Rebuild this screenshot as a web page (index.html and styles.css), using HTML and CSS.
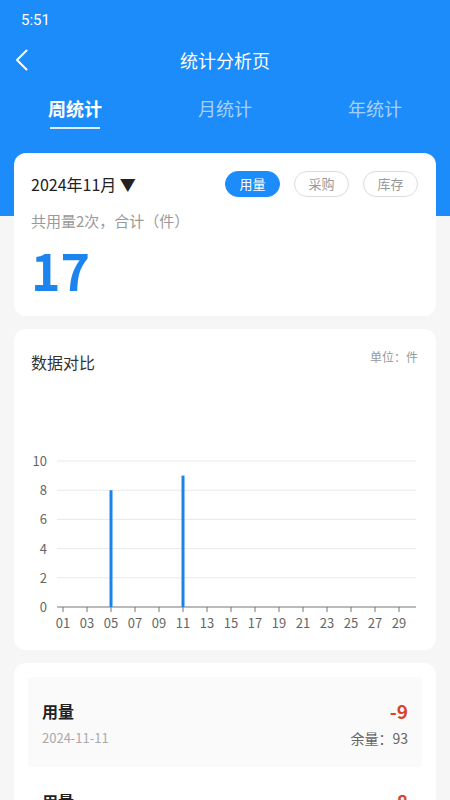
FILE: index.html
```html
<!DOCTYPE html>
<html lang="zh-CN">
<head>
  <meta charset="UTF-8">
  <meta name="viewport" content="width=device-width, initial-scale=1.0">
  <title>统计分析页</title>
  <link rel="stylesheet" href="styles.css">
</head>
<body>
  <div class="header">
    <div class="status-bar">5:51</div>
    <div class="nav-bar">
      <svg class="back" width="14" height="22" viewBox="0 0 14 22">
        <polyline points="11.5,1.5 2,11 11.5,20.5" fill="none" stroke="#fff" stroke-width="2" stroke-linecap="round" stroke-linejoin="round"/>
      </svg>
      <span class="title">统计分析页</span>
    </div>
    <ul class="tabs">
      <li class="active">周统计</li>
      <li>月统计</li>
      <li>年统计</li>
    </ul>
  </div>

  <div class="content">
    <div class="card summary">
      <div class="summary-top">
        <span class="month">2024年11月 ▼</span>
        <div class="pills">
          <span class="pill on">用量</span>
          <span class="pill">采购</span>
          <span class="pill">库存</span>
        </div>
      </div>
      <div class="summary-desc">共用量2次，合计（件）</div>
      <div class="summary-total">17</div>
    </div>

    <div class="card chart-card">
      <div class="chart-head">
        <span class="chart-title">数据对比</span>
        <span class="chart-unit">单位：件</span>
      </div>
      <svg id="chart" class="chart" width="388" height="200" viewBox="0 0 388 200"></svg>
    </div>

    <div class="card records">
      <div class="record shaded">
        <div class="record-row">
          <span class="record-type">用量</span>
          <span class="record-num">-9</span>
        </div>
        <div class="record-row">
          <span class="record-date">2024-11-11</span>
          <span class="record-left">余量：93</span>
        </div>
      </div>
      <div class="record">
        <div class="record-row">
          <span class="record-type">用量</span>
          <span class="record-num">-8</span>
        </div>
        <div class="record-row">
          <span class="record-date">2024-11-05</span>
          <span class="record-left">余量：102</span>
        </div>
      </div>
    </div>
  </div>

  <script>
    // bar chart of daily usage
    const usage = { 5: 8, 11: 9 };
    const chartEl = document.getElementById('chart');
    const axisLeft = 26, axisRight = 385, axisTop = 21, axisBottom = 167;
    const step = (axisBottom - axisTop) / 5;
    const dayW = 12;
    let svg = '';

    for (let i = 0; i <= 5; i++) {
      const y = axisBottom - i * step;
      if (i > 0) svg += `<line x1="${axisLeft}" y1="${y}" x2="${axisRight}" y2="${y}" stroke="#e6e8ee" stroke-width="1"/>`;
      svg += `<text x="16" y="${y + 5}" text-anchor="end" class="ylabel">${i * 2}</text>`;
    }
    svg += `<line x1="${axisLeft}" y1="${axisBottom}" x2="${axisRight}" y2="${axisBottom}" stroke="#777" stroke-width="1.2"/>`;

    for (let d = 1; d <= 29; d += 2) {
      const x = axisLeft + dayW / 2 + (d - 1) * dayW;
      svg += `<line x1="${x}" y1="${axisBottom}" x2="${x}" y2="${axisBottom + 5}" stroke="#777" stroke-width="1"/>`;
      svg += `<text x="${x}" y="${axisBottom + 21}" text-anchor="middle" class="xlabel">${String(d).padStart(2, '0')}</text>`;
    }

    Object.keys(usage).forEach(d => {
      const x = axisLeft + dayW / 2 + (d - 1) * dayW;
      const h = usage[d] / 2 * step;
      svg += `<rect x="${x - 1.5}" y="${axisBottom - h}" width="3" height="${h}" fill="#1a84ea"/>`;
    });

    chartEl.innerHTML = svg;
  </script>
</body>
</html>
```

FILE: styles.css
```css
body {
  margin: 0;
  padding: 0;
  background-color: #f6f6f6;
  font-family: "Noto Sans CJK SC", "Noto Sans", sans-serif;
}
.header {
  background-color: #1b8cfa;
  height: 216px;
  color: #fff;
}
.status-bar {
  height: 40px;
  line-height: 40px;
  padding-left: 21px;
  font-family: Roboto, "Noto Sans", sans-serif;
  font-size: 15px;
}
.nav-bar {
  height: 40px;
  display: flex;
  align-items: center;
  justify-content: center;
  position: relative;
}
.nav-bar .back {
  position: absolute;
  left: 15px;
  top: 9px;
}
.title {
  font-size: 18px;
}
.tabs {
  list-style-type: none;
  margin: 0;
  padding: 0;
  display: grid;
  grid-template-columns: repeat(3, 1fr);
  height: 50px;
}
.tabs li {
  text-align: center;
  font-size: 18px;
  line-height: 28px;
  padding-top: 14px;
  color: rgba(255, 255, 255, 0.62);
}
.tabs li.active {
  color: #fff;
  font-weight: bold;
}
.tabs li.active::after {
  content: "";
  display: block;
  width: 50px;
  height: 2px;
  margin: 5px auto 0;
  background-color: rgba(255, 255, 255, 0.85);
}
.content {
  margin-top: -63px;
  padding: 0 14px;
  display: flex;
  flex-direction: column;
  gap: 13px;
}
.card {
  background-color: #fff;
  border-radius: 12px;
}
.summary {
  padding: 18px 18px 18px 17px;
}
.summary-top {
  display: flex;
  align-items: center;
  justify-content: space-between;
  height: 26px;
}
.month {
  font-size: 16px;
  color: #222;
}
.pills {
  display: flex;
  gap: 14px;
}
.pill {
  width: 53px;
  height: 24px;
  line-height: 24px;
  text-align: center;
  border: 1px solid #dcdcdc;
  border-radius: 13px;
  font-size: 13px;
  color: #999;
}
.pill.on {
  background-color: #1b8cfa;
  border-color: #1b8cfa;
  color: #fff;
}
.summary-desc {
  margin-top: 13px;
  font-size: 15px;
  line-height: 22px;
  color: #999;
}
.summary-total {
  margin-top: 8px;
  font-size: 50px;
  line-height: 58px;
  font-weight: bold;
  color: #1b84ee;
}
.chart-card {
  padding: 18px 17px 10px;
}
.chart-head {
  display: flex;
  justify-content: space-between;
  align-items: flex-start;
}
.chart-title {
  font-size: 16px;
  line-height: 30px;
  color: #333;
}
.chart-unit {
  font-size: 12px;
  line-height: 20px;
  color: #999;
  margin-right: 1px;
}
.chart {
  display: block;
  margin-top: 63px;
}
.ylabel, .xlabel {
  font-size: 13px;
  fill: #666;
  font-family: "Noto Sans CJK SC", sans-serif;
}
.records {
  padding: 14px;
}
.record {
  padding: 22px 14px 19px;
  border-radius: 4px;
}
.record.shaded {
  background-color: #fafafa;
}
.record-row {
  display: flex;
  justify-content: space-between;
  align-items: center;
}
.record-row + .record-row {
  margin-top: 5px;
}
.record-type {
  font-size: 16px;
  line-height: 24px;
  font-weight: bold;
  color: #222;
}
.record-num {
  font-size: 19px;
  line-height: 24px;
  font-weight: bold;
  color: #d9442f;
}
.record-date {
  font-size: 13px;
  line-height: 20px;
  color: #aaa;
}
.record-left {
  font-size: 14px;
  line-height: 20px;
  color: #666;
}
```
